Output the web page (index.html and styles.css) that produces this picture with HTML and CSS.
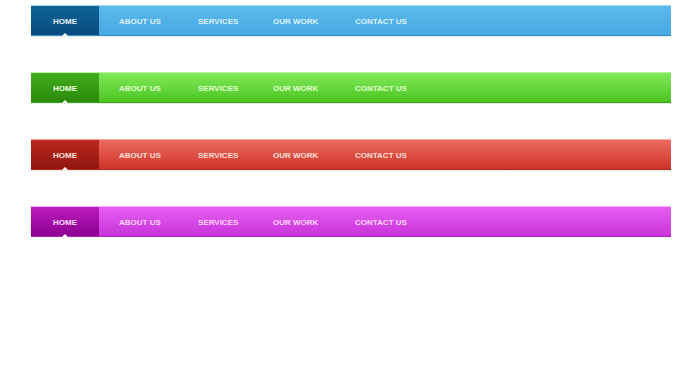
FILE: index.html
```html
<!DOCTYPE html>
<html lang="en">
<head>
    <meta charset="UTF-8">
    <title>Menu Bars</title>
    <link rel="stylesheet" href="styles.css">
</head>
<body>

    <div class="bars">
        <!-- Blue -->
        <ul class="nav blue">
            <li class="active">HOME</li>
            <li>ABOUT US</li>
            <li>SERVICES</li>
            <li>OUR WORK</li>
            <li>CONTACT US</li>
        </ul>

        <!-- Green -->
        <ul class="nav green">
            <li class="active">HOME</li>
            <li>ABOUT US</li>
            <li>SERVICES</li>
            <li>OUR WORK</li>
            <li>CONTACT US</li>
        </ul>

        <!-- Red -->
        <ul class="nav red">
            <li class="active">HOME</li>
            <li>ABOUT US</li>
            <li>SERVICES</li>
            <li>OUR WORK</li>
            <li>CONTACT US</li>
        </ul>

        <!-- Purple -->
        <ul class="nav purple">
            <li class="active">HOME</li>
            <li>ABOUT US</li>
            <li>SERVICES</li>
            <li>OUR WORK</li>
            <li>CONTACT US</li>
        </ul>
    </div>

</body>
</html>
```

FILE: styles.css
```css
body {
    margin: 0;
    background: #fff;
    font-family: "Liberation Sans", Arial, sans-serif;
}

.bars {
    padding: 5px 0 0 31px;
    display: flex;
    flex-direction: column;
    gap: 36px;
}

/* Menu bar */
.nav {
    width: 640px;
    height: 31px;
    margin: 0;
    padding: 0;
    list-style: none;
    display: flex;
    align-items: center;
    box-sizing: border-box;
    border-top: 1px solid;
    border-bottom: 1px solid;
    box-shadow: 0 1px 1px rgba(0, 0, 0, 0.08);
}

.nav li {
    font-size: 8px;
    font-weight: bold;
    white-space: nowrap;
    padding-top: 2px;
}

.nav li:nth-child(2) { margin-left: 20px; width: 79px; }
.nav li:nth-child(3) { width: 75px; }
.nav li:nth-child(4) { width: 82px; }

.nav .active {
    position: relative;
    width: 68px;
    height: 100%;
    box-sizing: border-box;
    display: flex;
    align-items: center;
    justify-content: center;
    color: #fff;
}

/* little arrow under the active item */
.nav .active::after {
    content: "";
    position: absolute;
    bottom: -1px;
    left: 31px;
    border-left: 3px solid transparent;
    border-right: 3px solid transparent;
    border-bottom: 3px solid #fff;
}

/* Blue */
.blue {
    background: linear-gradient(#5bb9ec, #46a9e1);
    border-color: #a8d8f4 #5aa9d8 #2d8ec8;
    color: #dff2ff;
}

.blue .active {
    background: linear-gradient(#0f6399, #0a4c7c);
    color: #e8f4ff;
}

/* Green */
.green {
    background: linear-gradient(#80e95a, #4cc522);
    border-color: #bdf3a4 #56c02b #36a812;
    color: #e2ffd0;
}

.green .active {
    background: linear-gradient(#43ad1c, #2a890c);
    color: #ecffe0;
}

/* Red */
.red {
    background: linear-gradient(#ec6a60, #cf342a);
    border-color: #f3aaa4 #d0463c #b92a20;
    color: #ffe0d8;
}

.red .active {
    background: linear-gradient(#bb271d, #8f1710);
    color: #ffe4dc;
}

/* Purple */
.purple {
    background: linear-gradient(#e65ff2, #c833da);
    border-color: #f1b0f7 #cb44db #b221c4;
    color: #ffd8ff;
}

.purple .active {
    background: linear-gradient(#be1cbf, #8c0092);
    color: #ffe0ff;
}
```
